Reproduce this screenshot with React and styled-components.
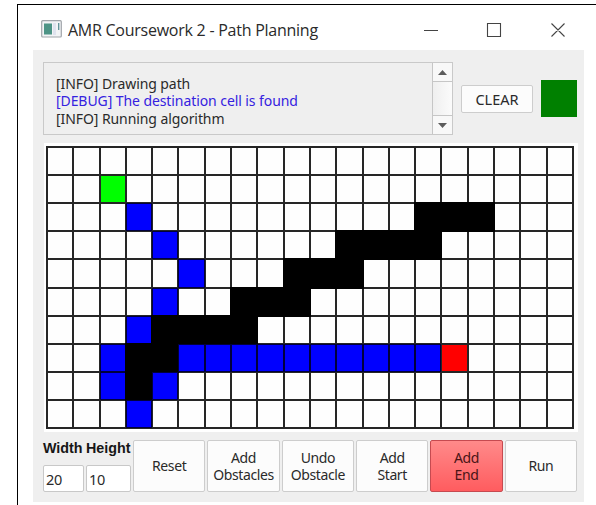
import React from 'react';
import styled, { createGlobalStyle, css } from 'styled-components';

const GlobalStyle = createGlobalStyle`
  * { box-sizing: border-box; }
  html, body { margin: 0; background: #fff; overflow: hidden; }
  button, input { font: inherit; color: inherit; margin: 0; }
`;

const uiFont = "'Noto Sans', 'Open Sans', sans-serif";

const Page = styled.div`
  width: 596px;
  height: 505px;
  padding: 4px 0 0 17px;
`;

const Frame = styled.div`
  height: 501px;
  border-top: 1px solid #000;
  border-left: 1px solid #000;
  padding-left: 15px;
  overflow: hidden;
`;

const Window = styled.main`
  width: 551px;
  font-family: ${uiFont};
  color: #2a2a2a;
`;

const TitleBar = styled.header`
  height: 45px;
  display: flex;
  align-items: center;
  padding: 5px 0 0 8px;
`;

const AppIcon = styled.svg`
  flex: none;
  margin-top: -3px;
`;

const Title = styled.h1`
  margin: 0 0 0 6px;
  flex: 1;
  font: 400 16px/22px 'Open Sans', sans-serif;
  letter-spacing: -0.25px;
  white-space: nowrap;
`;

const WindowControls = styled.svg`
  flex: none;
  margin: -1px 18px 0 0;
`;

const Body = styled.section`
  height: 452px;
  padding: 12px 6px 0 10px;
  background: #efefef;
`;

const TopRow = styled.div`
  height: 73px;
  display: flex;
  align-items: center;
`;

const LogBox = styled.div`
  width: 410px;
  height: 73px;
  flex: none;
  display: flex;
  border: 1px solid #c9c9c9;
`;

const LogLines = styled.div`
  flex: 1;
  padding: 12px 0 0 12px;
  font-size: 14px;
  line-height: 17.3px;
  letter-spacing: -0.08px;
  white-space: nowrap;
`;

const LogLine = styled.div`
  height: 17.3px;
  color: ${(p) => (p.$debug ? '#3522e0' : '#2a2a2a')};
`;

const ScrollBar = styled.div`
  width: 20px;
  display: grid;
  grid-template-rows: 18px 1fr 18px;
  gap: 1px;
  padding-left: 1px;
  background: #c6c6c6;
`;

const ScrollPart = styled.div`
  display: flex;
  align-items: center;
  justify-content: center;
  background: ${(p) => (p.$track ? 'linear-gradient(90deg, #efefef, #fbfbfb)' : '#f8f8f8')};
`;

const buttonFace = css`
  border: 1px solid #cdcdcd;
  border-radius: 2px;
  background: #fcfcfc;
`;

const ClearButton = styled.button`
  ${buttonFace}
  flex: none;
  width: 72px;
  height: 28px;
  margin-left: 8px;
  padding: 0;
  font-size: 14.5px;
  line-height: 18px;
`;

const StatusLight = styled.div`
  flex: none;
  width: 36px;
  height: 37px;
  margin-left: 8px;
  background: #008000;
`;

const Canvas = styled.div`
  width: 534px;
  height: 289px;
  margin: 8px 0 0 1px;
  padding: 3px 4px 3px 2px;
  background: #fff;
`;

const Board = styled.div`
  width: 528px;
  height: 283px;
  display: grid;
  grid-template-columns: repeat(20, 1fr);
  grid-template-rows: repeat(10, 1fr);
  gap: 2px;
  padding: 2px;
  background: #262626;
`;

const cellColors = { '.': '#fefefe', S: '#00ff00', E: '#ff0000', P: '#0000ff', X: '#000' };

const Cell = styled.div`
  background: ${(p) => cellColors[p.$kind]};
  box-shadow: ${(p) => {
    if (p.$kind === 'X') return '0 0 0 2px #000';
    return p.$kind === 'P' ? '0 0 0 1px #00003c' : 'none';
  }};
`;

const Controls = styled.form`
  display: flex;
  margin-top: 8px;
  height: 52px;
`;

const Field = styled.label`
  width: ${(p) => p.$width}px;
  margin-right: ${(p) => p.$gap}px;
  flex: none;
  display: flex;
  flex-direction: column;
  justify-content: space-between;
  font: 700 14.3px/17px 'Liberation Sans', sans-serif;
  letter-spacing: ${(p) => p.$tracking}px;
  color: #161616;
  white-space: nowrap;
`;

const NumberInput = styled.input`
  width: 100%;
  height: 27px;
  border: 1px solid #c8c8c8;
  border-radius: 2px;
  background: #fff;
  padding: 0 0 0 2px;
  font: 400 14.5px/20px ${uiFont};
  letter-spacing: -0.3px;
  color: #2a2a2a;
`;

const Actions = styled.div`
  display: grid;
  flex: none;
  width: 444px;
  grid-template-columns: repeat(6, 1fr);
  gap: 2px;
`;

const ActionButton = styled.button`
  ${buttonFace}
  height: 52px;
  padding: 0;
  font-size: 14px;
  letter-spacing: -0.4px;
  line-height: 17.3px;
  white-space: pre-line;
  ${(p) => p.$active && css`
    border-color: #c64a50;
    background: linear-gradient(#ff8a8a, #ff5c5f);
    color: #4a1416;
  `}
`;

const map = [
  '....................',
  '..S.................',
  '...P..........XXX...',
  '....P......XXXX.....',
  '.....P...XXX........',
  '....P..XXX..........',
  '...PXXXX............',
  '..PXXPPPPPPPPPPE....',
  '..PXP...............',
  '...P................',
];

const actions = ['Reset', 'Add\nObstacles', 'Undo\nObstacle', 'Add\nStart', 'Add\nEnd', 'Run'];

export default function App() {
  return (
    <Page>
      <GlobalStyle />
      <Frame>
        <Window>
          <TitleBar>
            <AppIcon width="21" height="18" viewBox="0 0 21 18">
              <rect x="0.7" y="0.7" width="19.6" height="16.3" rx="1" fill="#f2f4f6" stroke="#a0a5aa" strokeWidth="1.2" />
              <rect x="3" y="3.5" width="8" height="11" fill="#4d9486" />
              <rect x="12" y="3" width="3" height="12" fill="#dfe3ee" />
              <path d="M17.7 3v7" stroke="#5d8f96" strokeWidth="1.3" />
            </AppIcon>
            <Title>AMR Coursework 2 - Path Planning</Title>
            <WindowControls width="142" height="16" viewBox="0 0 142 16" fill="none" stroke="#444" strokeWidth="1.1">
              <path d="M0 8.5h14M63.5 1.5h13v13h-13zM127.5 1.5l13 13M140.5 1.5l-13 13" />
            </WindowControls>
          </TitleBar>
          <Body>
            <TopRow>
              <LogBox>
                <LogLines>
                  <LogLine>[INFO] Drawing path</LogLine>
                  <LogLine $debug>[DEBUG] The destination cell is found</LogLine>
                  <LogLine>[INFO] Running algorithm</LogLine>
                </LogLines>
                <ScrollBar>
                  <ScrollPart>
                    <svg width="9" height="5"><path d="M0 5L4.5 0 9 5z" fill="#5c5c5c" /></svg>
                  </ScrollPart>
                  <ScrollPart $track />
                  <ScrollPart>
                    <svg width="9" height="5"><path d="M0 0l4.5 5L9 0z" fill="#5c5c5c" /></svg>
                  </ScrollPart>
                </ScrollBar>
              </LogBox>
              <ClearButton type="button">CLEAR</ClearButton>
              <StatusLight />
            </TopRow>
            <Canvas>
              <Board>
                {map.flatMap((row, y) => [...row].map((kind, x) => <Cell key={`${x}-${y}`} $kind={kind} />))}
              </Board>
            </Canvas>
            <Controls>
              <Field $width={41} $gap={2} $tracking={0}>Width<NumberInput defaultValue="20" /></Field>
              <Field $width={45} $gap={2} $tracking={0}>Height<NumberInput defaultValue="10" /></Field>
              <Actions>
                {actions.map((label) => (
                  <ActionButton key={label} type="button" $active={label === 'Add\nEnd'}>{label}</ActionButton>
                ))}
              </Actions>
            </Controls>
          </Body>
        </Window>
      </Frame>
    </Page>
  );
}
